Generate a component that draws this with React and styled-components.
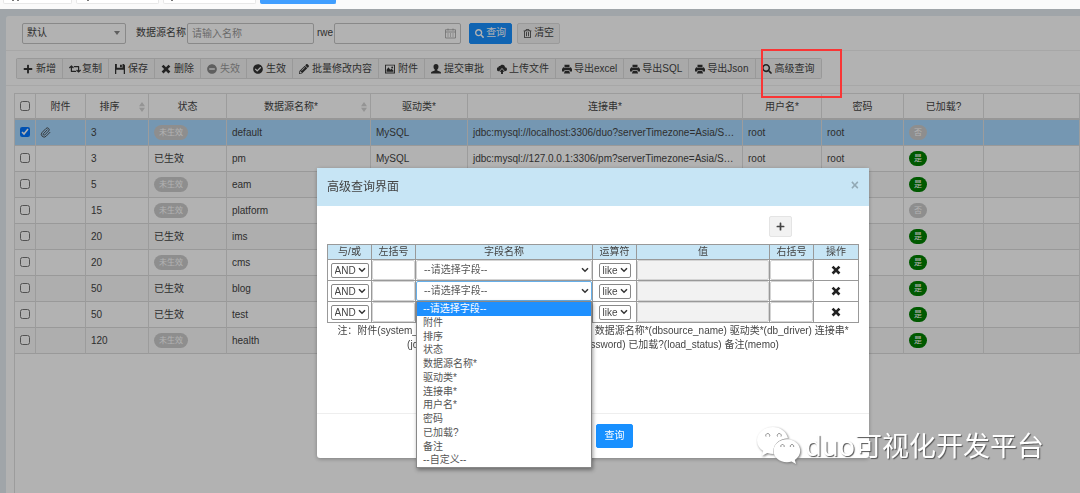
import React from 'react';
import styled, { createGlobalStyle, css } from 'styled-components';
import { Paperclip } from 'lucide-react';
import {
  FaCheckCircle,
  FaMinusCircle,
  FaPencilAlt,
  FaPlus,
  FaRegTrashAlt,
  FaRetweet,
  FaSearch,
} from 'react-icons/fa';

const tools = [
  { label: '新增', icon: <FaPlus /> },
  { label: '复制', icon: <FaRetweet />, wide: true, gap: 1 },
  { label: '保存', icon: <FloppyIcon /> },
  { label: '删除', icon: <RemoveIcon /> },
  { label: '失效', icon: <FaMinusCircle />, disabled: true },
  { label: '生效', icon: <FaCheckCircle /> },
  { label: '批量修改内容', icon: <FaPencilAlt /> },
  { label: '附件', icon: <PictureIcon /> },
  { label: '提交审批', icon: <UserIcon /> },
  { label: '上传文件', icon: <UploadIcon />, gap: 2 },
  { label: '导出excel', icon: <PrintIcon />, gap: 2 },
  { label: '导出SQL', icon: <PrintIcon />, gap: 2 },
  { label: '导出Json', icon: <PrintIcon />, gap: 2 },
  { label: '高级查询', icon: <FaSearch />, marked: true },
];

const columns = [
  { label: '附件', width: 50 },
  { label: '排序', width: 63, sortable: true },
  { label: '状态', width: 78 },
  { label: '数据源名称*', width: 144, sortable: true },
  { label: '驱动类*', width: 97 },
  { label: '连接串*', width: 275 },
  { label: '用户名*', width: 79 },
  { label: '密码', width: 82 },
  { label: '已加载?', width: 80 },
];

const localUrl = 'jdbc:mysql://localhost:3306/duo?serverTimezone=Asia/Shanghai';
const pmUrl = 'jdbc:mysql://127.0.0.1:3306/pm?serverTimezone=Asia/Shanghai';

const sources = [
  { name: 'default', sort: 3, url: localUrl, selected: true },
  { name: 'pm', sort: 3, url: pmUrl, active: true, loaded: true },
  { name: 'eam', sort: 5, loaded: true },
  { name: 'platform', sort: 15 },
  { name: 'ims', sort: 20, active: true, loaded: true },
  { name: 'cms', sort: 20, loaded: true },
  { name: 'blog', sort: 50, active: true, loaded: true },
  { name: 'test', sort: 50, active: true, loaded: true },
  { name: 'health', sort: 120, loaded: true },
];

const fields = [
  '--请选择字段--',
  '附件',
  '排序',
  '状态',
  '数据源名称*',
  '驱动类*',
  '连接串*',
  '用户名*',
  '密码',
  '已加载?',
  '备注',
  '--自定义--',
];

export default function App() {
  return (
    <>
      <GlobalStyle />
      <TabBar>
        <Tab $width={69} $inset={8}>
          <Mark />
          <Mark />
        </Tab>
        <Tab $width={83} $inset={10}>
          <Mark />
        </Tab>
        <Tab $width={93} $inset={7}>
          <Mark />
        </Tab>
        <Tab $width={76} $current />
      </TabBar>
      <Workspace>
        <Panel>
          <SearchForm />
          <Toolbar />
          <SourceTable />
        </Panel>
      </Workspace>
      <Overlay>
        <QueryDialog />
      </Overlay>
      <Watermark>
        <WechatIcon />
        duo可视化开发平台
      </Watermark>
    </>
  );
}

function SearchForm() {
  return (
    <FilterRow>
      <Combo type="button" aria-label="查询方案">
        默认
        <Caret viewBox="0 0 6 4">
          <path d="M0 0h6L3 4z" />
        </Caret>
      </Combo>
      <Field>
        数据源名称
        <TextInput placeholder="请输入名称" />
      </Field>
      <Field>
        rwe
        <DateBox>
          <TextInput />
          <CalendarIcon />
        </DateBox>
      </Field>
      <FormActions>
        <Button type="button" $primary>
          <FaSearch />
          查询
        </Button>
        <Button type="button">
          <FaRegTrashAlt />
          清空
        </Button>
      </FormActions>
    </FilterRow>
  );
}

function Toolbar() {
  return (
    <ToolRow>
      <ToolGroup>
        {tools.map(tool => (
          <ToolItem key={tool.label}>
            <ToolButton
              type="button"
              disabled={tool.disabled}
              $gap={tool.gap || 3}
              $wide={tool.wide}
            >
              {tool.icon}
              {tool.label}
            </ToolButton>
            {tool.marked && <Highlight />}
          </ToolItem>
        ))}
      </ToolGroup>
    </ToolRow>
  );
}

function SourceTable() {
  return (
    <TableFrame>
      <Table>
        <colgroup>
          <Col $width={21} />
          {columns.map(column => (
            <Col key={column.label} $width={column.width} />
          ))}
          <col />
        </colgroup>
        <thead>
          <tr>
            <HeadCell>
              <Check type="checkbox" aria-label="全选" />
            </HeadCell>
            {columns.map(({ label, sortable }) => (
              <HeadCell key={label} $sortable={sortable}>
                {label}
                {sortable && (
                  <SortIcon viewBox="0 0 6 10">
                    <path d="M0 4.3h6L3 0zM0 5.7h6L3 10z" />
                  </SortIcon>
                )}
              </HeadCell>
            ))}
            <HeadCell />
          </tr>
        </thead>
        <tbody>
          {sources.map(source => (
            <Row key={source.name} $selected={source.selected}>
              <Cell $narrow>
                <Check
                  type="checkbox"
                  aria-label={source.name}
                  defaultChecked={source.selected}
                />
              </Cell>
              <Cell $narrow>{source.selected && <Clip />}</Cell>
              <Cell>{source.sort}</Cell>
              <Cell>{source.active ? '已生效' : <Badge>未生效</Badge>}</Cell>
              <Cell>{source.name}</Cell>
              <Cell>MySQL</Cell>
              <Cell>{source.url || localUrl}</Cell>
              <Cell>root</Cell>
              <Cell>root</Cell>
              <Cell>
                <Badge $on={source.loaded}>{source.loaded ? '是' : '否'}</Badge>
              </Cell>
              <Cell />
            </Row>
          ))}
        </tbody>
      </Table>
    </TableFrame>
  );
}

function QueryDialog() {
  return (
    <Dialog role="dialog" aria-labelledby="query-title">
      <DialogHeader>
        <h2 id="query-title">高级查询界面</h2>
        <CloseButton type="button" aria-label="关闭">
          ×
        </CloseButton>
      </DialogHeader>
      <DialogBody>
        <AddRow>
          <AddButton type="button" aria-label="添加条件">
            <FaPlus />
          </AddButton>
        </AddRow>
        <Conditions>
          <colgroup>
            <Col $width={44} />
            <Col $width={44} />
            <Col $width={177} />
            <Col $width={44} />
            <Col $width={133} />
            <Col $width={44} />
            <Col $width={45} />
          </colgroup>
          <thead>
            <tr>
              <th>与/或</th>
              <th>左括号</th>
              <th>字段名称</th>
              <th>运算符</th>
              <th>值</th>
              <th>右括号</th>
              <th>操作</th>
            </tr>
          </thead>
          <tbody>
            <Condition />
            <Condition open />
            <Condition />
          </tbody>
        </Conditions>
        <Note>
          注：附件(system_no_attachment) 排序(sort) 状态(is_flag)
          数据源名称*(dbsource_name) 驱动类*(db_driver) 连接串*
          <br />
          (jdbc_url) 用户名*(username) 密码(db_password)
          已加载?(load_status) 备注(memo)
        </Note>
      </DialogBody>
      <DialogFooter>
        <FooterButton type="button">关闭</FooterButton>
        <FooterButton type="button" $primary>
          查询
        </FooterButton>
      </DialogFooter>
    </Dialog>
  );
}

function Condition({ open }) {
  return (
    <tr>
      <td>
        <SelectBox $width={38}>
          <SmallSelect aria-label="与/或">
            <option>AND</option>
            <option>OR</option>
          </SmallSelect>
          <Chevron />
        </SelectBox>
      </td>
      <td>
        <CellInput aria-label="左括号" />
      </td>
      <FieldCell>
        <SelectBox>
          <FieldSelect aria-label="字段名称" $open={open}>
            {fields.map(field => (
              <option key={field}>{field}</option>
            ))}
          </FieldSelect>
          <Chevron />
        </SelectBox>
        {open && (
          <Options role="listbox">
            {fields.map((field, index) => (
              <Option
                key={field}
                role="option"
                aria-selected={index === 0}
                $active={index === 0}
              >
                {field}
              </Option>
            ))}
          </Options>
        )}
      </FieldCell>
      <td>
        <SelectBox $width={32}>
          <SmallSelect aria-label="运算符">
            <option>like</option>
            <option>=</option>
          </SmallSelect>
          <Chevron />
        </SelectBox>
      </td>
      <td>
        <CellInput aria-label="值" disabled />
      </td>
      <td>
        <CellInput aria-label="右括号" />
      </td>
      <td>
        <RemoveButton type="button" aria-label="删除条件">
          <RemoveIcon />
        </RemoveButton>
      </td>
    </tr>
  );
}

function Chevron() {
  return (
    <svg viewBox="0 0 8 6" width="8" height="6" fill="none">
      <path d="M1 1.300l3 3 3-3" stroke="#333" strokeWidth="1.500" />
    </svg>
  );
}

function FloppyIcon() {
  return (
    <svg viewBox="0 0 16 16" fill="currentColor">
      <path d="M0 0h3v6h9V0h2l2 2v14h-2V9H2v7H0zM8 1h3v4H8z" />
    </svg>
  );
}

function RemoveIcon() {
  return (
    <svg viewBox="0 0 16 16" fill="currentColor">
      <path d="M4 1l4 4 4-4 3 3-4 4 4 4-3 3-4-4-4 4-3-3 4-4-4-4z" />
    </svg>
  );
}

function PictureIcon() {
  return (
    <svg viewBox="0 0 16 16" fill="currentColor">
      <path
        fillRule="evenodd"
        d="M0 1h16v14H0zM1.500 2.500v11h13v-11zM2.500 12.500V9l3-4 3 4 2-1.500 3 3v2zM11.500 4a1.500 1.500 0 1 1 0 3 1.500 1.500 0 0 1 0-3z"
      />
    </svg>
  );
}

function UserIcon() {
  return (
    <svg viewBox="0 0 16 16" fill="currentColor">
      <path d="M8 0c2.500 0 4 1.800 4 4.300 0 1.900-.9 3.700-2 4.500v1.400l5 2.200c.7.300 1 .8 1 1.500V15H0v-1.100c0-.7.300-1.200 1-1.500l5-2.200V8.800C4.900 8 4 6.200 4 4.300 4 1.800 5.500 0 8 0z" />
    </svg>
  );
}

function UploadIcon() {
  return (
    <svg viewBox="0 0 16 16" fill="currentColor">
      <path d="M3.500 11.500A3.300 3.300 0 0 1 2.300 5C2.700 3.500 4 3 5 3.300 6 1.500 7.500 1 9 1.200c2.200.2 3.700 2 3.700 4 2 0 3.300 1.300 3.300 3.100 0 1.900-1.500 3.200-3.500 3.200L8 6.500z" />
      <path d="M8 8l4 4.300H9.500V16h-3v-3.700H4z" />
    </svg>
  );
}

function PrintIcon() {
  return (
    <svg viewBox="0 0 16 16" fill="currentColor">
      <path d="M4 1h8v4H4zM2 5h1v1h10V5h1l2 3v4h-3l-1-2H4l-1 2H0V8zM4.500 11h7l1.500 4H3z" />
    </svg>
  );
}

function CalendarIcon() {
  return (
    <svg viewBox="0 0 22 20" fill="none" stroke="#999" strokeWidth="1.500">
      <path d="M1 2.500h20v16.500H1zM1 7h20M6 0v4M16 0v4" />
      <path d="M5 11h12M5 15h12" strokeDasharray="2 3" strokeWidth="2" />
    </svg>
  );
}

function WechatIcon() {
  return (
    <svg viewBox="0 0 44 37" width="44" height="37">
      <path
        fill="#fff"
        d="M16 0C7 0 0 6 0 13.500c0 4.500 2.400 8 6.200 10.600L4.600 29l5.700-2.900c2 .6 4 .9 6.300.9C15 19 21 11.500 31 11.300 29.500 4.700 23.300 0 16 0z"
      />
      <path
        fill="#fff"
        d="M30 12.300c-7.700 0-13.500 5.200-13.500 11.500S22.300 35.200 30 35.200c1.600 0 3.200-.3 4.600-.7L39 37l-1.200-4c3.300-2.300 5.400-5.500 5.400-9.200 0-6.300-5.900-11.500-13.200-11.500z"
      />
      <g fill="none" stroke="#888">
        <path d="M9 9.500a2 2 0 1 1 3.500 0M20.500 9.500a2 2 0 1 1 3.500 0" />
        <path d="M24 20a1.700 1.700 0 1 1 3 0M33.500 20a1.700 1.700 0 1 1 3 0" />
      </g>
    </svg>
  );
}

const GlobalStyle = createGlobalStyle`
  * {
    box-sizing: border-box;
  }

  body {
    margin: 0;
    overflow: hidden;
    background: #e5edf2;
    color: #444;
    font-family: "Liberation Sans", "Noto Sans CJK SC", sans-serif;
    font-size: 10px;
    line-height: 14px;
  }

  button, input, select {
    margin: 0;
    color: inherit;
    font: inherit;
  }
`;

const TabBar = styled.nav`
  display: flex;
  gap: 4px;
  height: 9px;
  padding: 0 3px 5px;
  background: #fafafa;
`;

const Tab = styled.div`
  display: flex;
  gap: 3px;
  width: ${props => props.$width}px;
  padding-left: ${props => props.$inset}px;
  border: 1px solid ${props => (props.$current ? '#409eff' : '#e8e8e8')};
  border-top: 0;
  border-radius: 0 0 2px 2px;
  background: ${props => (props.$current ? '#409eff' : '#fff')};
`;

const Mark = styled.span`
  width: 2px;
  height: 1px;
  background: #777;
`;

const Workspace = styled.main`
  min-height: calc(100vh - 9px);
  padding: 7px 0 0 6px;
`;

const Panel = styled.section`
  min-height: calc(100vh - 16px);
  border-radius: 3px 0 0 0;
  background: #fff;
`;

const FilterRow = styled.form`
  display: flex;
  align-items: center;
  height: 35px;
  padding-left: 16px;
  border-bottom: 1px solid #f0f0f0;
`;

const control = css`
  height: 21px;
  border: 1px solid #c4c4c4;
  border-radius: 2px;
  background: #fff;
`;

const Combo = styled.button`
  ${control}
  display: flex;
  align-items: center;
  justify-content: space-between;
  width: 104px;
  margin-right: 10px;
  padding: 0 5px 0 4px;
`;

const Caret = styled.svg`
  width: 6px;
  height: 4px;
  fill: #888;
`;

const Field = styled.label`
  display: flex;
  align-items: center;
  gap: 1px;
  margin-right: 3px;
`;

const TextInput = styled.input`
  ${control}
  width: 127px;
  padding: 0 4px;

  &::placeholder {
    color: #999;
  }
`;

const DateBox = styled.span`
  position: relative;
  display: flex;

  svg {
    position: absolute;
    top: 5px;
    right: 5px;
    width: 11px;
    height: 11px;
  }
`;

const FormActions = styled.div`
  display: flex;
  gap: 5px;
  margin-left: 5px;
`;

const Button = styled.button`
  display: flex;
  align-items: center;
  justify-content: center;
  gap: 2px;
  width: 43px;
  height: 21px;
  padding: 0;
  border: 1px solid ${props => (props.$primary ? '#1890ff' : '#ddd')};
  border-radius: 2px;
  background: ${props => (props.$primary ? '#1890ff' : '#f2f2f2')};
  color: ${props => (props.$primary ? '#fff' : '#444')};

  svg {
    width: 9px;
    height: 9px;
  }
`;

const ToolRow = styled.div`
  padding: 7px 0 6px 10px;
  border-bottom: 1px solid #f0f0f0;
`;

const ToolGroup = styled.div`
  display: inline-flex;
  border: 1px solid #dcdcdc;
  border-left: 0;
  border-radius: 2px;
  vertical-align: top;
`;

const ToolItem = styled.div`
  position: relative;
`;

const ToolButton = styled.button`
  display: flex;
  align-items: center;
  gap: ${props => props.$gap}px;
  height: 19px;
  padding: 0 6px;
  border: 0;
  border-left: 1px solid #dcdcdc;
  background: #f2f2f2;
  white-space: nowrap;

  svg {
    flex: none;
    width: ${props => (props.$wide ? 12 : 10)}px;
    height: 10px;
    color: #333;
  }

  &:disabled {
    color: #999;

    svg {
      color: #888;
    }
  }
`;

const Highlight = styled.span`
  position: absolute;
  z-index: 3;
  top: -10px;
  right: -21px;
  bottom: -20px;
  left: 6px;
  border: 2px solid #f93535;
  pointer-events: none;
`;

const TableFrame = styled.div`
  min-height: calc(100vh - 93px);
  margin: 7px 0 0 8px;
  border: solid #e0e0e0;
  border-width: 1px 0 0 1px;
`;

const Table = styled.table`
  width: 100%;
  table-layout: fixed;
  border-spacing: 0;
`;

const Col = styled.col`
  width: ${props => props.$width}px;
`;

const HeadCell = styled.th`
  position: relative;
  height: 26px;
  padding: 2px ${props => (props.$sortable ? 15 : 0)}px 0 0;
  border-right: 1px solid #e0e0e0;
  border-bottom: 2px solid #d8d8d8;
  font-weight: normal;
`;

const SortIcon = styled.svg`
  position: absolute;
  top: 8px;
  right: 3px;
  width: 6px;
  height: 10px;
  fill: #d4d4d4;
`;

const Row = styled.tr`
  background: ${props => (props.$selected ? '#a8d9ff' : '#fff')};

  &:nth-child(2n + 3) {
    background: #f9f9f9;
  }
`;

const Cell = styled.td`
  height: 26px;
  padding: 0 ${props => (props.$narrow ? 4 : 5)}px;
  border-right: 1px solid #e0e0e0;
  border-bottom: 1px solid #dcdcdc;
  overflow: hidden;
  text-overflow: ellipsis;
  white-space: nowrap;
`;

const Check = styled.input`
  display: block;
  width: 10px;
  height: 10px;
  margin: 0 0 2px 5px;

  ${Cell} & {
    margin-left: 1px;
  }
`;

const Clip = styled(Paperclip)`
  display: block;
  width: 11px;
  height: 11px;
`;

const Badge = styled.span`
  display: inline-block;
  height: 15px;
  padding: 0 5px;
  border-radius: 8px;
  background: ${props => (props.$on ? '#008000' : '#ccc')};
  color: #fff;
  font-size: 8px;
  line-height: 15px;
  vertical-align: middle;
`;

const Overlay = styled.div`
  position: fixed;
  z-index: 2;
  inset: 9px 0 0;
  display: flex;
  align-items: flex-start;
  justify-content: center;
  padding: 159px 0 0 106px;
  background: rgba(0, 0, 0, 0.3);
`;

const Dialog = styled.section`
  flex: 0 1 552px;
  border-radius: 3px;
  background: #fff;
  box-shadow: 0 1px 4px rgba(0, 0, 0, 0.3);
`;

const DialogHeader = styled.header`
  display: flex;
  align-items: center;
  justify-content: space-between;
  height: 38px;
  padding: 0 10px;
  background: #c7e5f5;

  h2 {
    margin: 0;
    font-size: 12px;
    font-weight: normal;
  }
`;

const CloseButton = styled.button`
  padding: 0 0 4px;
  border: 0;
  background: none;
  color: #92a9b5;
  font-size: 14px;
  font-weight: bold;
`;

const DialogBody = styled.div`
  min-height: 207px;
  padding: 10px;
`;

const AddRow = styled.div`
  display: flex;
  justify-content: flex-end;
  padding: 0 67px 7px 0;
`;

const AddButton = styled.button`
  display: flex;
  align-items: center;
  justify-content: center;
  width: 23px;
  height: 21px;
  border: 1px solid #e4e4e4;
  border-radius: 2px;
  background: #f2f2f2;

  svg {
    flex: none;
    width: 9px;
    height: 9px;
  }
`;

const Conditions = styled.table`
  width: 100%;
  table-layout: fixed;
  border-collapse: collapse;

  th,
  td {
    padding: 0;
    border: 1px solid #999;
    text-align: center;
  }

  th {
    height: 15px;
    background: #c7e5f5;
    font-weight: normal;
    line-height: 14px;
  }

  td {
    height: 21px;
  }
`;

const SelectBox = styled.div`
  position: relative;
  width: ${props => (props.$width ? `${props.$width}px` : '100%')};
  margin: 0 auto;

  svg {
    position: absolute;
    top: calc(50% - 3px);
    right: 3px;
    pointer-events: none;
  }
`;

const SmallSelect = styled.select`
  display: block;
  width: 100%;
  height: 15px;
  padding: 0 0 0 3px;
  border: 1px solid #888;
  border-radius: 2px;
  background: #fff;
  line-height: 13px;
  appearance: none;
`;

const CellInput = styled.input`
  display: block;
  width: 100%;
  height: 20px;
  border: 1px solid #d4d4d4;
  border-radius: 2px;
  background: ${props => (props.disabled ? '#f2f2f2' : '#fff')};
`;

const FieldCell = styled.td`
  position: relative;
`;

const FieldSelect = styled.select`
  display: block;
  width: 100%;
  height: 20px;
  padding: 0 0 0 7px;
  border: 1px solid ${props => (props.$open ? '#66afe9' : '#d4d4d4')};
  border-radius: 2px;
  background: #fff;
  color: #555;
  appearance: none;
`;

const Options = styled.ul`
  position: absolute;
  z-index: 4;
  top: 20px;
  left: 0;
  display: grid;
  grid-auto-rows: 1fr;
  width: 100%;
  height: 167px;
  margin: 0;
  padding: 0;
  border: 1px solid #888;
  background: #fff;
  box-shadow: 1px 2px 4px rgba(0, 0, 0, 0.4);
  line-height: 13px;
  list-style: none;
  text-align: left;
`;

const Option = styled.li`
  padding-left: 6px;
  background: ${props => (props.$active ? '#1e90ff' : '#fff')};
  color: ${props => (props.$active ? '#fff' : '#555')};
`;

const RemoveButton = styled.button`
  display: block;
  margin: 0 auto;
  padding: 0;
  border: 0;
  background: none;
  color: #222;

  svg {
    display: block;
    width: 10px;
    height: 10px;
  }
`;

const Note = styled.p`
  margin: 0;
  padding-top: 1px;
  text-align: center;
  white-space: nowrap;
`;

const DialogFooter = styled.footer`
  display: flex;
  justify-content: center;
  gap: 6px;
  padding: 10px;
  border-top: 1px solid #eee;
`;

const FooterButton = styled(Button)`
  width: 37px;
  height: 24px;
`;

const Watermark = styled.div`
  position: fixed;
  z-index: 5;
  right: 36px;
  bottom: 29px;
  display: flex;
  align-items: center;
  gap: 4px;
  color: #fff;
  font-family: "Noto Sans", "Noto Sans CJK SC", sans-serif;
  font-size: 27px;
  line-height: 36px;
  text-shadow: 1px 1px 1px #555;

  svg {
    filter: drop-shadow(1px 1px 1px #777);
  }
`;
